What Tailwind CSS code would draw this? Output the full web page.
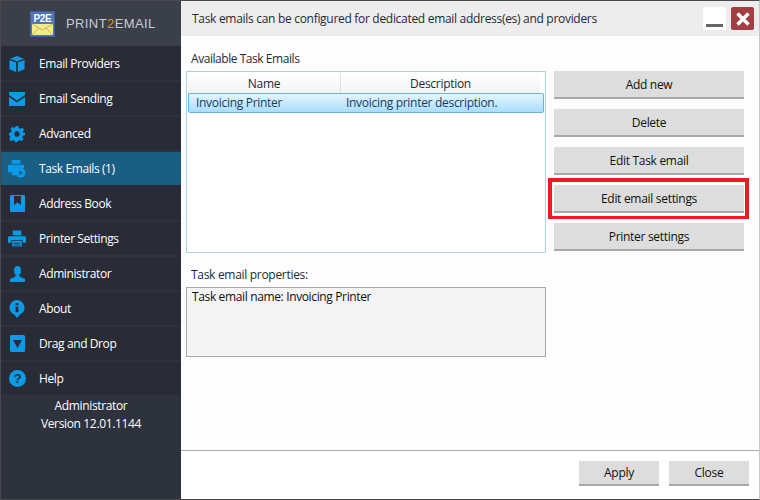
<!DOCTYPE html>
<html lang="en">
<head>
<meta charset="UTF-8">
<title>Print2Email</title>
<script src="https://cdn.jsdelivr.net/npm/@tailwindcss/browser@4"></script>
</head>
<body class="w-[760px] h-[500px] overflow-hidden bg-white font-['Open_Sans',sans-serif] text-[12px] tracking-[-0.3px]">
<div class="w-[760px] h-[500px] flex border-t border-l border-r border-b border-[#4a4a4a] border-r-[#c8c8c8]">
  <!-- Sidebar -->
  <aside class="w-[180px] shrink-0 bg-[#2e323d] text-white flex flex-col">
    <div class="h-[45px] bg-[#3a3f4a] flex items-center pl-[29px] gap-[11px]">
      <svg width="25" height="26" viewBox="0 0 25 26"><rect width="25" height="26" fill="#3f5f9e"/><rect x="1" y="1" width="23" height="24" fill="#5275b8"/><path d="M2 13h21v11H2z" fill="#f5e98e"/><path d="M2 13l10.500 6 10.500-6M2 24l7-7M23 24l-7-7" fill="none" stroke="#c9b95c"/><text x="12.500" y="11" text-anchor="middle" font-size="10" font-weight="700" fill="#fff" font-family="Liberation Sans">P2E</text></svg>
      <span class="font-['Liberation_Sans',sans-serif] text-[13px] tracking-[0.4px] text-[#c9ccd1]">PRINT<span class="text-[#d99a12]">2</span>EMAIL</span>
    </div>
    <nav class="flex flex-col tracking-[-0.4px]">
      <a class="h-[36px] pt-[2px] flex items-center bg-[#292c37] border-b-2 border-[#2e323d]">
        <span class="w-[32px] mr-[6px] flex justify-center"><svg width="16" height="16" viewBox="0 0 18 18" fill="#0a9be8"><path d="M9 0l8 3-8 3-8-3z"/><path d="M0.500 4.500l7.500 2.800V18L0.500 15z"/><path d="M17.500 4.500L10 7.300V18l7.500-3z"/></svg></span>
        <span>Email Providers</span>
      </a>
      <a class="h-[35px] flex items-center bg-[#292c37] border-b-2 border-[#2e323d]">
        <span class="w-[32px] mr-[6px] flex justify-center"><svg width="16" height="14" viewBox="0 0 18 14" preserveAspectRatio="none" fill="#0a9be8"><path d="M0 0h18v3L9 8.500 0 3z"/><path d="M0 5l9 5.500L18 5v9H0z"/></svg></span>
        <span>Email Sending</span>
      </a>
      <a class="h-[35px] flex items-center bg-[#292c37] border-b-2 border-[#2e323d]">
        <span class="w-[32px] mr-[6px] flex justify-center"><svg width="16" height="16" viewBox="0 0 24 24" fill="#0a9be8"><path fill-rule="evenodd" d="M10 0h4l.7 3.300 2.300 1 2.900-1.800 2.800 2.800-1.800 2.900 1 2.300L24 10v4l-3.100.7-1 2.300 1.800 2.900-2.800 2.800-2.900-1.800-2.300 1-.7 3.100h-4l-.7-3.100-2.300-1-2.900 1.800-2.800-2.800 1.800-2.900-1-2.300L0 14v-4l3.100-.7 1-2.300-1.800-2.900 2.800-2.800L7 3l2.300-1zM12 8a4 4 0 100 8 4 4 0 000-8z"/></svg></span>
        <span>Advanced</span>
      </a>
      <a class="h-[33px] flex items-center bg-[#1b5e83]">
        <span class="w-[32px] mr-[6px] flex justify-center"><svg width="18" height="18" viewBox="0 0 19 19" fill="#0a9be8"><path d="M4 0h9v4H4z"/><path d="M0 5h17v4a6 6 0 00-7 7H4v-3H0z"/><circle cx="13.500" cy="13.500" r="5"/><path d="M12 11l4 2.500-4 2.500z" fill="#1b5e83"/></svg></span>
        <span>Task Emails (1)</span>
      </a>
      <a class="h-[37px] pt-[2px] flex items-center bg-[#292c37] border-b-2 border-[#2e323d]">
        <span class="w-[32px] mr-[6px] flex justify-center"><svg width="15" height="17" viewBox="0 0 15 17" fill="#0a9be8"><path fill-rule="evenodd" d="M1 0h13a1 1 0 011 1v15a1 1 0 01-1 1H1a1 1 0 01-1-1V1a1 1 0 011-1zm3 1v9l3.500-2.500L11 10V1z"/></svg></span>
        <span>Address Book</span>
      </a>
      <a class="h-[35px] flex items-center bg-[#292c37] border-b-2 border-[#2e323d]">
        <span class="w-[32px] mr-[6px] flex justify-center"><svg width="18" height="17" viewBox="0 0 19 17" fill="#0a9be8"><path d="M5 0h9v5H5z"/><path d="M1.500 6h16A1.500 1.500 0 0119 7.500V13h-3.500v-3h-12v3H0V7.500A1.500 1.500 0 011.500 6z"/><path fill-rule="evenodd" d="M4.500 11h10v6h-10zM6 13v1h7v-1zm0 2v1h7v-1z"/></svg></span>
        <span>Printer Settings</span>
      </a>
      <a class="h-[35px] flex items-center bg-[#292c37] border-b-2 border-[#2e323d]">
        <span class="w-[32px] mr-[6px] flex justify-center"><svg width="15" height="16" viewBox="0 0 15 16" fill="#0a9be8"><ellipse cx="7.500" cy="4.500" rx="3.500" ry="4.500"/><path d="M5.500 9h4v1.500L15 13v3H0v-3l5.500-2.500z"/></svg></span>
        <span>Administrator</span>
      </a>
      <a class="h-[35px] flex items-center bg-[#292c37] border-b-2 border-[#2e323d]">
        <span class="w-[32px] mr-[6px] flex justify-center"><svg width="16" height="18" viewBox="0 0 17 19" fill="#0a9be8"><path fill-rule="evenodd" d="M8.500 0a8 8 0 013 15.400L8.500 19l-3-3.600A8 8 0 018.500 0zM7 3v2.500h3V3zm0 4v6h3V7z"/></svg></span>
        <span>About</span>
      </a>
      <a class="h-[35px] flex items-center bg-[#292c37] border-b-2 border-[#2e323d]">
        <span class="w-[32px] mr-[6px] flex justify-center"><svg width="15" height="17" viewBox="0 0 15 17" fill="#0a9be8"><path fill-rule="evenodd" d="M1.500 0h12A1.500 1.500 0 0115 1.500v14a1.500 1.500 0 01-1.500 1.500h-12A1.500 1.500 0 010 15.500v-14A1.500 1.500 0 011.500 0zM3 5l4.500 8L12 5z"/></svg></span>
        <span>Drag and Drop</span>
      </a>
      <a class="h-[33px] flex items-center bg-[#292c37]">
        <span class="w-[32px] mr-[6px] flex justify-center"><svg width="17" height="17" viewBox="0 0 17 17"><circle cx="8.500" cy="8.500" r="8.500" fill="#0a9be8"/><text x="8.500" y="13" text-anchor="middle" font-size="13" font-weight="700" fill="#292c37" font-family="Liberation Sans">?</text></svg></span>
        <span>Help</span>
      </a>
    </nav>
    <div class="text-center leading-[18px] pt-[2px] tracking-[-0.35px]">
      <p>Administrator</p>
      <p>Version 12.01.1144</p>
    </div>
  </aside>
  <!-- Main -->
  <main class="flex-1 flex flex-col text-[#1f2a37] bg-[#fdfdfd]">
    <header class="h-[35px] bg-[#ededed] flex items-center pl-[11px] pr-[5px] shrink-0">
      <span class="flex-1">Task emails can be configured for dedicated email address(es) and providers</span>
      <span class="w-[23px] h-[23px] bg-white rounded-[2px] flex items-end justify-center pb-[3px] mr-[5px]"><span class="w-[17px] h-[3px] bg-[#666]"></span></span>
      <span class="w-[23px] h-[23px] bg-[#a23f45] rounded-[2px] flex items-center justify-center"><svg width="14" height="14" viewBox="0 0 14 14"><path d="M1.500 1.500l11 11M12.500 1.500l-11 11" stroke="#fff" stroke-width="3.500"/></svg></span>
    </header>
    <div class="flex-1 flex pl-[5px] pt-[14px] min-h-0">
      <section class="w-[360px] flex flex-col">
        <p class="pl-[5px] leading-[17px] mb-[4px] tracking-[-0.45px]">Available Task Emails</p>
        <div class="h-[182px] border border-[#a9d3ea] bg-white p-px">
          <div class="flex items-center h-[21px] bg-gradient-to-b from-white to-[#f3f3f3] border-b border-[#d8d8d8] mr-[4px] text-center">
            <span class="w-[153px] border-r border-[#dfdfdf] h-full pt-[2px]">Name</span>
            <span class="flex-1 h-full pt-[2px]">Description</span>
          </div>
          <div class="h-[20px] -mt-px flex items-center rounded-[2px] border border-[#6fb0d8] bg-gradient-to-b from-[#e4f5fd] to-[#a8defb] text-[#1c3a5e] pl-[7px]">
            <span class="w-[150px]">Invoicing Printer</span>
            <span>Invoicing printer description.</span>
          </div>
        </div>
        <p class="pl-[5px] mt-[13px] mb-[4px] leading-[17px]">Task email properties:</p>
        <div class="h-[70px] border border-[#a9a9a9] bg-[#f4f4f4] px-[5px] text-[#111] tracking-[-0.36px]">Task email name: Invoicing Printer</div>
      </section>
      <section class="ml-[8px] w-[190px] flex flex-col gap-[10px] text-[#111] pt-[21px]">
        <button class="h-[28px] w-[190px] pt-[2px] bg-[#dddddd] border-b-2 border-[#a9a9a9] text-center">Add new</button>
        <button class="h-[28px] w-[190px] pt-[2px] bg-[#dddddd] border-b-2 border-[#a9a9a9] text-center">Delete</button>
        <button class="h-[28px] w-[190px] pt-[2px] bg-[#dddddd] border-b-2 border-[#a9a9a9] text-center">Edit Task email</button>
        <div class="relative">
          <button class="h-[28px] w-[190px] pt-[2px] bg-[#dddddd] border-b-2 border-[#a9a9a9] text-center block">Edit email settings</button>
          <span class="absolute -left-[6px] -right-[5px] -top-[7px] -bottom-[6px] border-[4px] border-b-[3px] border-[#ed1c24]"></span>
        </div>
        <button class="h-[28px] w-[190px] pt-[2px] bg-[#dddddd] border-b-2 border-[#a9a9a9] text-center">Printer settings</button>
      </section>
    </div>
    <footer class="h-[49px] shrink-0 border-t border-[#a9a9a9] bg-white flex justify-end gap-[10px] pr-[10px] pt-[10px] text-[#111]">
      <button class="w-[80px] h-[25px] bg-[#dddddd] border-b-2 border-[#a9a9a9]">Apply</button>
      <button class="w-[80px] h-[25px] bg-[#dddddd] border-b-2 border-[#a9a9a9]">Close</button>
    </footer>
  </main>
</div>
</body>
</html>
